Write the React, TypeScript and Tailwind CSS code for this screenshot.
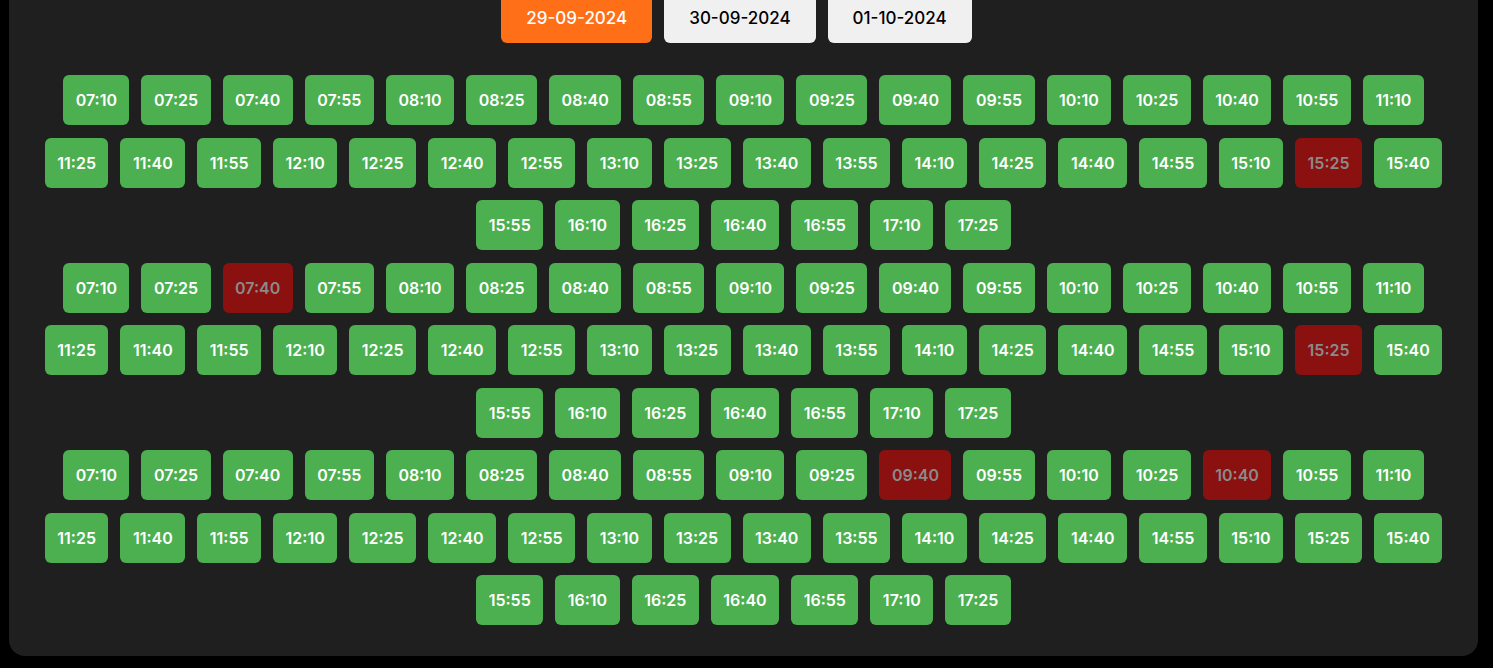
import React, { useState } from 'react';

const dates = ['29-09-2024', '30-09-2024', '01-10-2024'];

// 07:10 .. 17:25, every 15 minutes
const buildSlots = (): string[] => {
  const slots: string[] = [];
  for (let m = 7 * 60 + 10; m <= 17 * 60 + 25; m += 15) {
    const h = String(Math.floor(m / 60)).padStart(2, '0');
    const mm = String(m % 60).padStart(2, '0');
    slots.push(`${h}:${mm}`);
  }
  return slots;
};

const slots = buildSlots();

const bookedByDay: string[][] = [
  ['15:25'],
  ['07:40', '15:25'],
  ['09:40', '10:40'],
];

const App: React.FC = () => {
  const [selectedDate, setSelectedDate] = useState(dates[0]);
  const [selectedSlot, setSelectedSlot] = useState<string | null>(null);

  return (
    <div className="min-h-screen bg-black overflow-hidden" style={{ fontFamily: 'Inter, "Open Sans", sans-serif' }}>
      <div className="ml-[9px] w-[1469px] -mt-[31px] bg-[#1f1f1f] rounded-2xl px-6 pt-6 pb-[31px]">
        {/* Date tabs */}
        <div className="flex justify-center gap-3 pr-[14px]">
          {dates.map(date => (
            <button
              key={date}
              onClick={() => setSelectedDate(date)}
              className={`px-[25px] py-[14px] leading-[22px] text-[17px] font-medium rounded-md ${
                selectedDate === date ? 'bg-[#ff6f17] text-white' : 'bg-[#f0f0f0] text-black'
              }`}
            >
              {date}
            </button>
          ))}
        </div>

        {/* Time slots per day */}
        <div className="mt-8 flex flex-col gap-[12.5px]">
          {bookedByDay.map((booked, dayIdx) => (
            <div key={dayIdx} className="flex flex-wrap justify-center gap-x-3 gap-y-[12.5px]">
              {slots.map(slot => {
                const taken = booked.includes(slot);
                return (
                  <button
                    key={slot}
                    disabled={taken}
                    onClick={() => setSelectedSlot(`${dayIdx}-${slot}`)}
                    className={`h-[50px] px-[12.5px] rounded-md text-[16px] font-semibold ${
                      taken ? 'bg-[#8b1010] text-[#8a8a8a]' : 'bg-[#4caf50] text-white'
                    } ${selectedSlot === `${dayIdx}-${slot}` ? 'ring-2 ring-white' : ''}`}
                  >
                    {slot}
                  </button>
                );
              })}
            </div>
          ))}
        </div>
      </div>
    </div>
  );
};

export default App;
